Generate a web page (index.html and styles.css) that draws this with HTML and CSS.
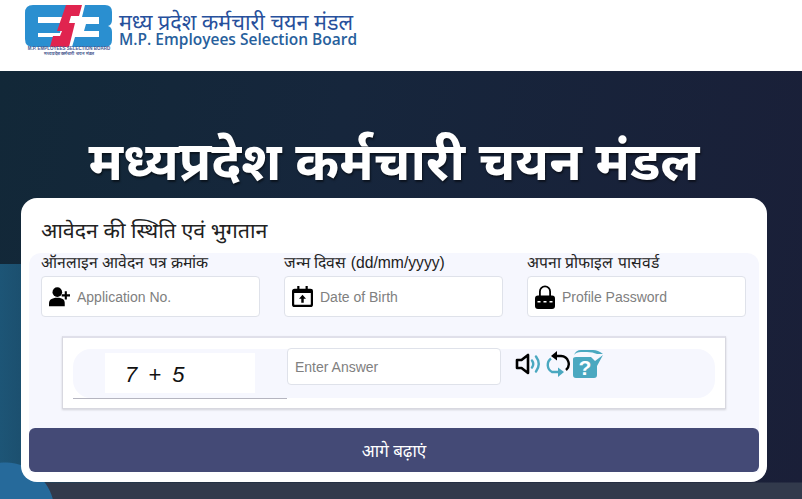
FILE: index.html
```html
<!DOCTYPE html>
<html lang="hi">
<head>
  <meta charset="UTF-8">
  <meta name="viewport" content="width=device-width, initial-scale=1.0">
  <title>मध्यप्रदेश कर्मचारी चयन मंडल</title>
  <link rel="stylesheet" href="styles.css">
</head>
<body>
  <header class="topbar">
    <div class="logo">
      <svg class="logo-mark" viewBox="25 5 88 42" width="88" height="42">
        <path fill="#2a8fd0" d="M33 5H70L66 17H38V23H62L60 33H38V37H58L55 47H33Q25 47 25 39V13Q25 5 33 5Z"/>
        <path fill="#2a8fd0" d="M85 5H105Q112 5 112 12V20Q112 25 108 26Q112 27 112 32V40Q112 47 105 47H72L75 37H99V31H84L86 24H99V17H82Z"/>
        <path fill="#e0244f" d="M66 5H82L79 16H71L69 23H75L69 47H50L53 36H60L62 31H57Z"/>
      </svg>
      <div class="logo-tiny">M.P. EMPLOYEES SELECTION BOARD</div>
      <div class="logo-tiny">मध्यप्रदेश कर्मचारी चयन मंडल</div>
    </div>
    <div class="logo-text">
      <div class="logo-hi">मध्य प्रदेश कर्मचारी चयन मंडल</div>
      <div class="logo-en">M.P. Employees Selection Board</div>
    </div>
  </header>

  <main class="hero">
    <h1 class="hero-title">मध्यप्रदेश कर्मचारी चयन मंडल</h1>

    <form class="card">
      <h2 class="card-title">आवेदन की स्थिति एवं भुगतान</h2>

      <div class="card-body">
        <div class="fields">
          <div class="field">
            <label class="field-label">ऑनलाइन आवेदन पत्र क्रमांक</label>
            <div class="field-box">
              <svg class="field-icon" viewBox="0 0 24 24" width="21" height="21">
                <circle cx="9.5" cy="7" r="5.500"/>
                <path d="M0 23v-3c0-4 3-6.500 9.500-6.500S18 16 18 20v3z"/>
                <path d="M18 6h2.400v3.500H24v2.400h-3.600v3.500H18v-3.500h-3.500V9.500H18z"/>
              </svg>
              <input class="field-input" type="text" placeholder="Application No.">
            </div>
          </div>

          <div class="field">
            <label class="field-label">जन्म दिवस (dd/mm/yyyy)</label>
            <div class="field-box">
              <svg class="field-icon" viewBox="0 0 24 24" width="21" height="21">
                <path d="M6 0h2.500v3h7V0H18v3h3q3 0 3 3v15q0 3-3 3H3q-3 0-3-3V6q0-3 3-3h3zM2.500 8v12.500q0 1 1 1h17q1 0 1-1V8z"/>
                <path d="M12 10l4 4.500h-2.600V19h-2.800v-4.500H8z"/>
              </svg>
              <input class="field-input" type="text" placeholder="Date of Birth">
            </div>
          </div>

          <div class="field">
            <label class="field-label">अपना प्रोफाइल पासवर्ड</label>
            <div class="field-box">
              <svg class="field-icon" viewBox="0 0 20 24" width="20" height="24">
                <path d="M4 11V6.500a6 6 0 0 1 12 0V11h-1.800V6.500a4.200 4.200 0 0 0-8.400 0V11z"/>
                <path d="M3 10.500h14q3 0 3 3V21q0 3-3 3H3q-3 0-3-3v-7.500q0-3 3-3z"/>
                <path d="M2.500 16h3v1.600h-3zM8.500 16h3v1.600h-3zM14.500 16h3v1.600h-3z" fill="#fff"/>
              </svg>
              <input class="field-input" type="text" placeholder="Profile Password">
            </div>
          </div>
        </div>

        <div class="captcha-card">
          <div class="captcha-row">
            <div class="captcha-left">
              <div class="captcha-code">7 + 5</div>
            </div>
            <input class="captcha-input" type="text" placeholder="Enter Answer">
            <div class="captcha-tools">
              <svg viewBox="0 0 27 24" width="27" height="24">
                <path d="M2 8h4.500L13 3v18l-6.500-5H2z" fill="none" stroke="#000" stroke-width="2.600" stroke-linejoin="round"/>
                <path d="M17 8.500q2.500 3.500 0 7M21 4.500q5.500 7.500 0 15" fill="none" stroke="#4aa8c0" stroke-width="2.400" stroke-linecap="round"/>
              </svg>
              <svg viewBox="0 0 27 26" width="27" height="26">
                <path d="M7 7.500A8 8 0 0 0 8 21H15" fill="none" stroke="#4aa8c0" stroke-width="2.400"/>
                <path d="M12 5H17A8 8 0 0 1 22 19" fill="none" stroke="#000" stroke-width="2.400"/>
                <path d="M13 0L7 5l6 4.500z" fill="#000"/>
                <path d="M14 16.500l6 4.500-6 5z" fill="#4aa8c0"/>
              </svg>
              <svg viewBox="0 0 31 30" width="31" height="30">
                <path d="M1 6Q3 1 8 1H20Q25 1 30 5H24Q20 3 14 3H8Q3 3 1 6Z" fill="#4aa8c0"/>
                <path d="M0 10Q0 8 3 8H18L22 12 30 6 24 17V26Q24 29 21 29H3Q0 29 0 26Z" fill="#4aa8c0"/>
                <text x="12" y="26" class="help-mark">?</text>
              </svg>
            </div>
          </div>
        </div>

        <button class="submit-btn" type="button">आगे बढ़ाएं</button>
      </div>
    </form>
  </main>
</body>
</html>
```

FILE: styles.css
```css
* {
  margin: 0;
  padding: 0;
  box-sizing: border-box;
}

body {
  width: 802px;
  height: 499px;
  overflow: hidden;
  font-family: "Liberation Sans", Arial, sans-serif;
  background: #fff;
}

.topbar {
  height: 71px;
  background: #fff;
  display: flex;
  align-items: flex-start;
  padding: 5px 0 0 25px;
  gap: 6px;
}

.logo {
  width: 88px;
}

.logo-mark {
  display: block;
}

.logo-tiny {
  font-size: 4.500px;
  line-height: 4.500px;
  font-weight: 700;
  text-align: center;
  white-space: nowrap;
  color: #4a5a90;
}

.logo-text {
  padding-top: 9px;
}

.logo-hi {
  font-family: "Noto Sans", sans-serif;
  font-size: 21.500px;
  line-height: 16px;
  white-space: nowrap;
  color: #27509c;
}

.logo-en {
  font-family: "Open Sans", sans-serif;
  font-size: 15.500px;
  font-weight: 600;
  line-height: 18px;
  color: #27609c;
}

.hero {
  height: 428px;
  background:
    radial-gradient(circle at 5px 441px, #266a9b 0, #266a9b 49px, transparent 50px),
    linear-gradient(to top, #323a4c 0, #323a4c 16px, transparent 17px),
    linear-gradient(to right, rgba(30, 90, 125, 0.9), rgba(30, 90, 125, 0) 22%) bottom / 100% 55% no-repeat,
    linear-gradient(100deg, #122838 0%, #16263c 40%, #1a1f38 100%);
  padding: 53px 35px 0 21px;
}

.hero-title {
  font-family: "Noto Sans", sans-serif;
  font-size: 53px;
  line-height: 72px;
  font-weight: 700;
  color: #fff;
  text-align: center;
  white-space: nowrap;
  height: 74px;
  text-shadow: 1px 2px 2px rgba(0, 0, 0, 0.5);
}

.card {
  position: relative;
  width: 746px;
  height: 284px;
  background: #fff;
  border-radius: 16px;
  padding: 18px 8px 10px;
}

.card-title {
  font-family: "Noto Sans", sans-serif;
  font-size: 21.400px;
  font-weight: 400;
  line-height: 28px;
  color: #222;
  margin: 0 0 9px 12px;
}

.card-body {
  background: #f6f7fe;
  border-radius: 12px 12px 0 0;
  height: 219px;
}

.fields {
  display: grid;
  grid-template-columns: 219px 219px 219px;
  column-gap: 24px;
  padding-left: 12px;
}

.field-label {
  display: block;
  height: 23px;
  font-size: 15.700px;
  line-height: 20px;
  white-space: nowrap;
  color: #222;
}

.field-box {
  display: flex;
  align-items: center;
  height: 41px;
  background: #fff;
  border: 1px solid #dfe2ea;
  border-radius: 4px;
  padding-left: 7px;
  gap: 7px;
}

.field-icon {
  flex: none;
  fill: #000;
}

.field-input {
  flex: 1;
  min-width: 0;
  border: none;
  outline: none;
  background: transparent;
  font-family: inherit;
  font-size: 14px;
}

.field-input::placeholder,
.captcha-input::placeholder {
  color: #808080;
  opacity: 1;
}

.captcha-card {
  width: 664px;
  height: 73px;
  margin: 19px 0 0 33px;
  padding: 11px 10px 0;
  background: #fff;
  border: 1px solid #d8d8e0;
  border-top: 2px solid #e0e0ea;
  box-shadow: 0 1px 2px rgba(0, 0, 0, 0.15);
}

.captcha-row {
  display: flex;
  align-items: flex-start;
  height: 49px;
  background: #f6f7fe;
  border-radius: 18px;
}

.captcha-left {
  width: 214px;
  height: 50px;
  padding: 4px 0 0 32px;
  border-bottom: 1px solid #b5b5c0;
}

.captcha-code {
  width: 150px;
  height: 40px;
  background: #fff;
  font-size: 22px;
  font-style: italic;
  line-height: 44px;
  padding-left: 20px;
  white-space: pre;
  word-spacing: 5px;
  color: #111;
}

.captcha-input {
  width: 214px;
  height: 37px;
  margin-top: -1px;
  border: 1px solid #dfe2ea;
  border-radius: 4px;
  background: #fff;
  padding-left: 7px;
  font-family: inherit;
  font-size: 14px;
  outline: none;
}

.captcha-tools {
  display: flex;
  align-items: center;
  gap: 2px;
  height: 30px;
  margin-left: 14px;
}

.help-mark {
  font-family: "Liberation Sans", sans-serif;
  font-size: 21px;
  font-weight: 700;
  fill: #fff;
  text-anchor: middle;
}

.submit-btn {
  display: block;
  width: 730px;
  height: 44px;
  margin-top: 19px;
  background: #444a76;
  border: none;
  border-radius: 6px;
  color: #fff;
  font-family: "Noto Sans", sans-serif;
  font-size: 17px;
}
```
